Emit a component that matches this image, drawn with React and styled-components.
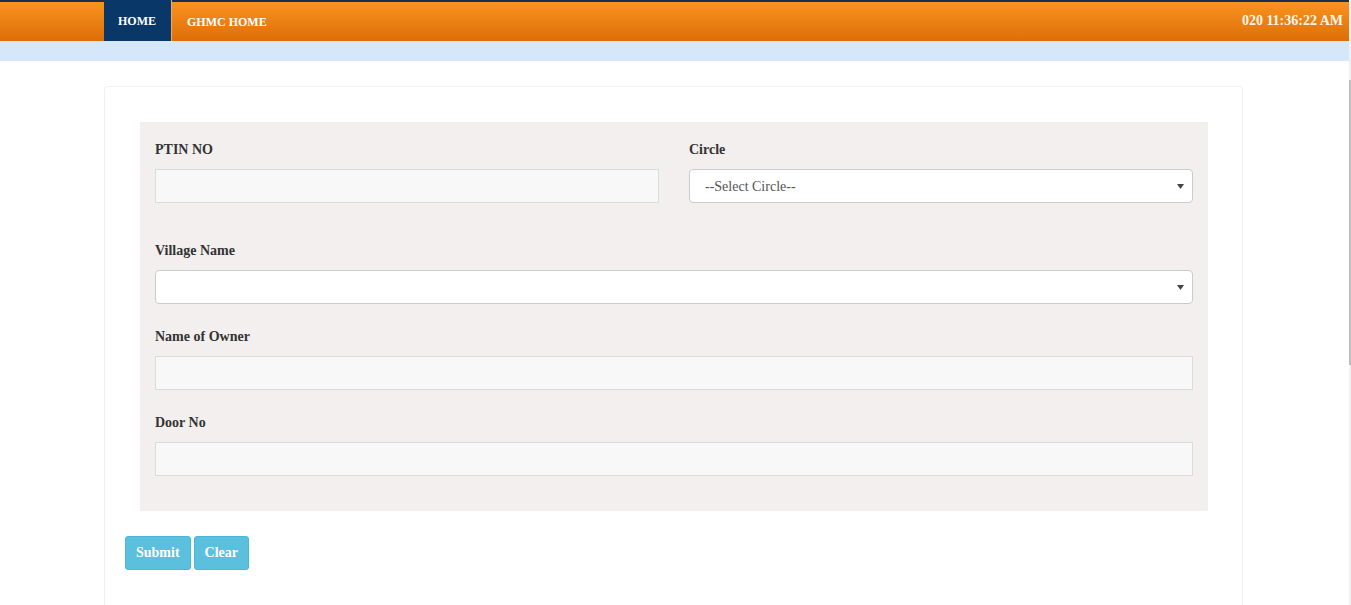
import React from "react";
import styled, { createGlobalStyle } from "styled-components";

const GlobalStyle = createGlobalStyle`
  html, body {
    margin: 0;
    padding: 0;
    background: #ffffff;
    font-family: "Liberation Serif", "Times New Roman", serif;
    overflow: hidden;
  }
  * { box-sizing: border-box; }
`;

export default function App() {
  return (
    <>
      <GlobalStyle />
      <Page>
        <Main>
          <NavBar>
            <NavLinks>
              <NavItem $active>HOME</NavItem>
              <NavItem>GHMC HOME</NavItem>
            </NavLinks>
            <Clock>020 11:36:22 AM</Clock>
          </NavBar>
          <SubBand />
          <Card>
            <FormPanel>
              <Row $first>
                <Field>
                  <Label>PTIN NO</Label>
                  <Input type="text" />
                </Field>
                <Field>
                  <Label>Circle</Label>
                  <SelectBox>
                    <option>--Select Circle--</option>
                  </SelectBox>
                </Field>
              </Row>
              <Row $gap={38}>
                <Field>
                  <Label>Village Name</Label>
                  <SelectBox>
                    <option></option>
                  </SelectBox>
                </Field>
              </Row>
              <Row>
                <Field>
                  <Label>Name of Owner</Label>
                  <Input type="text" />
                </Field>
              </Row>
              <Row>
                <Field>
                  <Label>Door No</Label>
                  <Input type="text" />
                </Field>
              </Row>
            </FormPanel>
            <Actions>
              <Button>Submit</Button>
              <Button>Clear</Button>
            </Actions>
          </Card>
        </Main>
        <ScrollTrack>
          <ScrollThumb />
        </ScrollTrack>
      </Page>
    </>
  );
}

const Page = styled.div`
  display: flex;
  width: 1351px;
  height: 605px;
  overflow: hidden;
`;
const Main = styled.div`
  flex: 1;
  min-width: 0;
`;
const ScrollTrack = styled.div`
  width: 2px;
  background: #f1f1f1;
  padding-top: 80px;
`;
const ScrollThumb = styled.div`
  width: 2px;
  height: 285px;
  background: #bdbdbd;
`;
const NavBar = styled.div`
  height: 41px;
  border-top: 2px solid #1c2d4d;
  background: linear-gradient(#f9931f, #dd6e08);
  display: flex;
  align-items: stretch;
  justify-content: space-between;
  padding-left: 104px;
  padding-right: 6px;
`;
const NavLinks = styled.div`
  display: flex;
`;
const NavItem = styled.div`
  display: flex;
  align-items: center;
  padding: 1px 15px 0 14px;
  margin-top: ${(p) => (p.$active ? "-2px" : "0")};
  margin-right: ${(p) => (p.$active ? "1px" : "0")};
  background: ${(p) => (p.$active ? "#083768" : "transparent")};
  border-right: ${(p) => (p.$active ? "1px solid #f0a868" : "none")};
  color: #ffffff;
  font-size: 12px;
  font-weight: bold;
`;
const Clock = styled.div`
  display: flex;
  align-items: center;
  color: #fff6ea;
  font-size: 14px;
  font-weight: bold;
  padding-bottom: 2px;
`;
const SubBand = styled.div`
  height: 20px;
  background: #d5e7fb;
`;
const Card = styled.div`
  margin: 25px 0 0 104px;
  width: 1139px;
  height: 560px;
  border: 1px solid #f1f1f1;
  border-radius: 3px;
  padding: 35px 34px 0 20px;
`;
const FormPanel = styled.div`
  margin-left: 15px;
  background: #f2efee;
  padding: 3px 15px 35px;
`;
const Row = styled.div`
  display: grid;
  grid-auto-flow: column;
  grid-auto-columns: 1fr;
  column-gap: 30px;
  margin-top: ${(p) => (p.$first ? 15 : p.$gap || 23)}px;
`;
const Field = styled.div`
  display: flex;
  flex-direction: column;
`;
const Label = styled.label`
  display: block;
  height: 20px;
  line-height: 20px;
  margin-bottom: 9px;
  font-size: 14px;
  font-weight: bold;
  color: #333333;
`;
const Input = styled.input`
  height: 34px;
  width: 100%;
  background: #f8f8f8;
  border: 1px solid #dcdcdc;
  border-radius: 0;
  outline: none;
`;
const SelectBox = styled.select`
  height: 34px;
  width: 100%;
  background: #ffffff;
  border: 1px solid #cccccc;
  border-radius: 4px;
  padding: 0 15px;
  font-family: "Liberation Serif", "Times New Roman", serif;
  font-size: 14px;
  color: #555555;
  appearance: none;
  background-image: url("data:image/svg+xml;utf8,<svg xmlns='http://www.w3.org/2000/svg' width='7' height='5'><path d='M0 0h7L3.5 5z' fill='%23444'/></svg>");
  background-repeat: no-repeat;
  background-position: right 8px center;
`;
const Actions = styled.div`
  display: flex;
  gap: 3px;
  margin-top: 25px;
`;
const Button = styled.button`
  height: 34px;
  padding: 0 10px;
  background: #5bc0de;
  border: 1px solid #46b8da;
  border-radius: 3px;
  color: #ffffff;
  font-family: "Liberation Serif", "Times New Roman", serif;
  font-size: 14px;
  font-weight: bold;
`;
